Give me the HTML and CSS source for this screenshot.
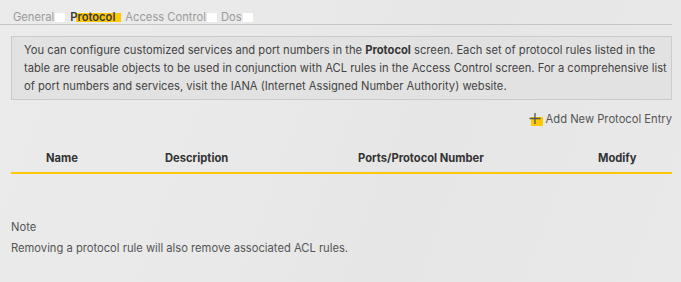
FILE: index.html
```html
<!DOCTYPE html>
<html><head><link rel="stylesheet" href="styles.css"></head>
<body>
<div class="page">
  <nav class="tabs">
    <span class="tab">General</span>
    <span class="tab active">Protocol</span>
    <span class="tab">Access Control</span>
    <span class="tab">Dos</span>
  </nav>
  <div class="content">
    <div class="info">You can configure customized services and port numbers in the <b>Protocol</b> screen. Each set of protocol rules listed in the table are reusable objects to be used in conjunction with ACL rules in the Access Control screen. For a comprehensive list of port numbers and services, visit the IANA (Internet Assigned Number Authority) website.</div>
    <div class="actions">
      <span class="add">
        <span class="plus"><svg width="14" height="14" viewBox="0 0 14 14"><path d="M7 1v11M1.5 6.5h11" stroke="#555" stroke-width="1.3" fill="none"/></svg></span>
        Add New Protocol Entry
      </span>
    </div>
    <div class="thead">
      <span class="c1">Name</span>
      <span class="c2">Description</span>
      <span class="c3">Ports/Protocol Number</span>
      <span class="c4">Modify</span>
    </div>
    <div class="note">
      <div class="note-title">Note</div>
      <div class="note-text">Removing a protocol rule will also remove associated ACL rules.</div>
    </div>
  </div>
</div>
</body></html>
```
FILE: styles.css
```css
html,body{margin:0;padding:0;}
body{
  width:681px;height:282px;overflow:hidden;
  background:linear-gradient(110deg,#ebebeb 0%,#e9e9e9 40%,#e6e6e6 60%,#e9e9e9 100%);
  font-family:"Inter","Open Sans",sans-serif;
  font-size:11.2px;color:#444;
}
.page{width:672px;}
.tabs{
  display:flex;align-items:flex-end;
  border-bottom:1px solid #c6c6c6;
  padding-left:13px;box-sizing:border-box;height:25px;
}
.tab{
  color:#9a9a9a;font-size:11.2px;line-height:9px;height:9px;
  margin-bottom:2px;padding-right:11px;
  background:linear-gradient(to right,transparent calc(100% - 10px),#fff calc(100% - 10px));
  margin-right:4px;
}
.tab.active{
  color:#3a3a3a;font-weight:600;
  background:linear-gradient(to right,transparent 6px,#ffc800 6px);
  padding-right:6px;margin-left:1px;
}
.content{padding-left:11px;}
.info{
  margin-top:11px;
  border:1px solid #cbcbcb;background:#e2e2e2;
  padding:4px 4px 4px 12px;line-height:18px;height:54px;
  color:#444;
}
.info b{font-weight:700;color:#333;}
.actions{display:flex;justify-content:flex-end;margin-top:10px;height:18px;align-items:center;}
.add{display:flex;align-items:center;gap:3px;color:#555;}
.plus{position:relative;width:15px;height:14px;display:inline-block;}
.plus::before{content:"";position:absolute;left:3px;top:5px;width:12px;height:9px;background:#ffc800;}
.plus svg{position:relative;}
.thead{
  display:grid;grid-template-columns:119px 193px 240px 1fr;
  padding-left:35px;height:30px;margin-top:16px;align-items:center;
  border-bottom:2px solid #ffc800;box-sizing:border-box;
  font-weight:700;color:#333;
}
.note{margin-top:44px;}
.note-title{line-height:18px;color:#555;}
.note-text{line-height:18px;margin-top:3px;color:#555;}
```
